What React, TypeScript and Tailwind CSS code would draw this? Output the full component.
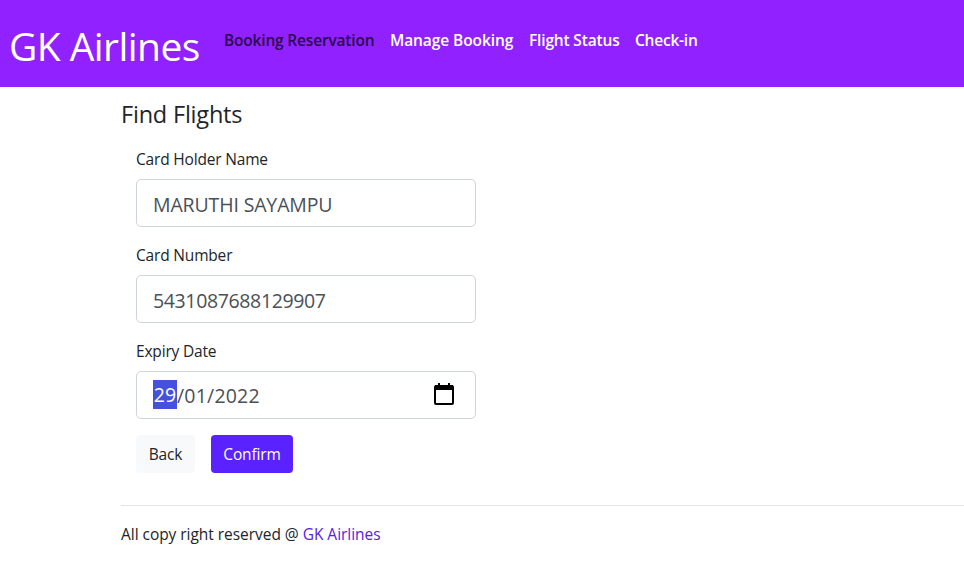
import type { ReactNode } from "react";

function Field({ label, children }: { label: ReactNode; children: ReactNode }) {
  return (
    <div className="mb-4">
      <label className="mb-2 block h-6 text-[15.5px] leading-[25px] tracking-[-0.18px]">{label}</label>
      <div className="flex h-12 w-[340px] items-center rounded-[5px] border border-[#ced4da] px-4 text-xl text-[#495057]">
        {children}
      </div>
    </div>
  );
}

function CalendarIcon() {
  return (
    <svg className="mr-1 mb-[3px] ml-auto h-6 w-[22px]" viewBox="0 0 22 24" fill="none">
      <path d="M6 1v4M16 1v4" stroke="black" strokeWidth="2" />
      <path d="M2 3h18v5H2z" fill="black" />
      <rect x="2" y="4" width="18" height="18" rx="1" stroke="black" strokeWidth="2" />
    </svg>
  );
}

export default function App() {
  return (
    <div className="h-[565px] overflow-hidden bg-white font-['Open_Sans',sans-serif] text-base text-[#212529]">
      <header className="flex h-[87px] bg-[#9122ff] pl-[9px] text-white">
        <a className="w-[215px] pt-4 text-[39px] leading-[60px] tracking-[-0.55px]">GK Airlines</a>
        <nav className="flex gap-4 pt-7 text-[15.5px] leading-6 font-semibold whitespace-nowrap">
          <a className="w-[150px] tracking-[-0.18px] text-[#2c0a4d]">Booking Reservation</a>
          <a className="w-[123px] tracking-[-0.09px]">Manage Booking</a>
          <a className="w-[90px] tracking-[-0.16px]">Flight Status</a>
          <a className="tracking-[-0.22px]">Check-in</a>
        </nav>
      </header>
      <main className="pl-[121px] pt-3">
        <h2 className="h-8 text-[23.5px] leading-[31px] tracking-[-0.2px]">Find Flights</h2>
        <div className="pl-[15px] pt-4">
          <Field label="Card Holder Name">
            <span className="pt-[3px] text-[19.5px] tracking-[-0.14px]">MARUTHI SAYAMPU</span>
          </Field>
          <Field label="Card Number">
            <span className="pt-[3px] text-[19.5px] tracking-[-0.36px]">5431087688129907</span>
          </Field>
          <Field label="Expiry Date">
            <span className="mb-px flex h-[29px] w-6 items-center justify-center bg-[#4551dc] pt-px text-[19.5px] text-white">29</span>
            <span className="pt-px text-[19.5px] tracking-[0.2px]">/01/2022</span>
            <CalendarIcon />
          </Field>
          <div className="flex gap-4 text-[15.5px]">
            <button className="h-[38px] w-[59px] rounded bg-[#f8f9fa] pt-px tracking-[-0.2px]">Back</button>
            <button className="h-[38px] w-[82px] rounded bg-[#5a22ff] pt-px tracking-[-0.15px] text-white">Confirm</button>
          </div>
        </div>
        <footer className="mt-8 border-t border-[#e5e5e5] pt-4 text-[15.5px] leading-[25px] tracking-[-0.04px]">
          All copy right reserved @ <a className="text-[#5a22e0]">GK Airlines</a>
        </footer>
      </main>
    </div>
  );
}
